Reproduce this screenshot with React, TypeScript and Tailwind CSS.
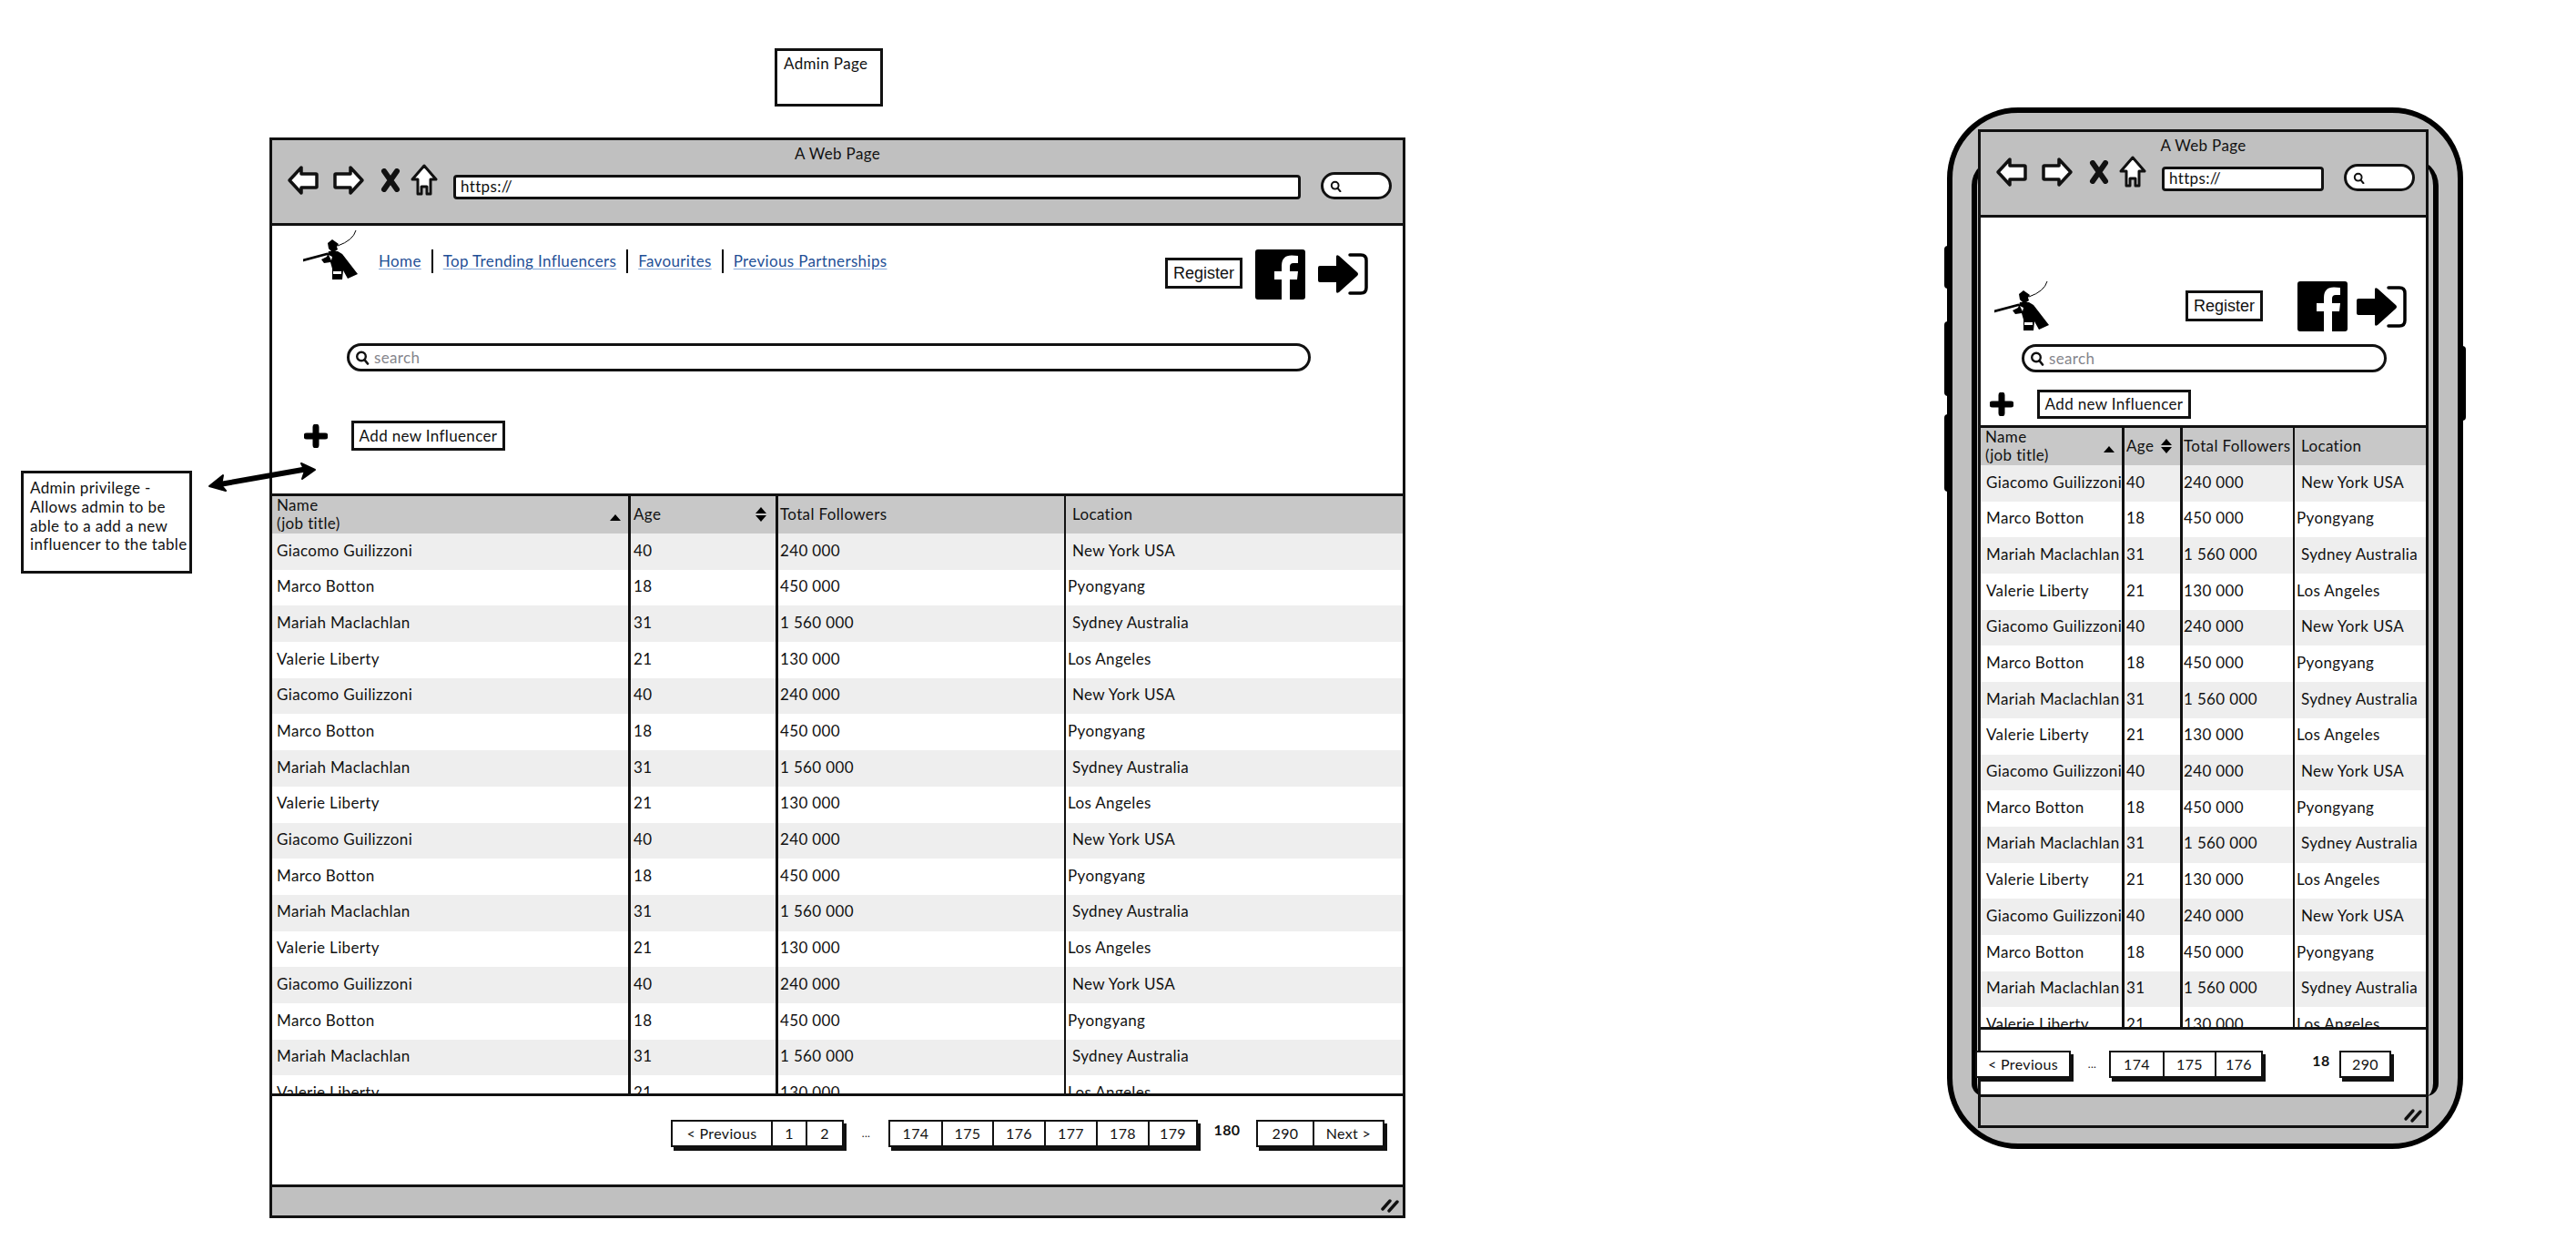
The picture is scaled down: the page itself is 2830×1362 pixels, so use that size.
import type { ReactNode } from "react";

const people = [
  { name: "Giacomo Guilizzoni", age: "40", followers: "240 000", location: "New York USA", indent: true },
  { name: "Marco Botton", age: "18", followers: "450 000", location: "Pyongyang", indent: false },
  { name: "Mariah Maclachlan", age: "31", followers: "1 560 000", location: "Sydney Australia", indent: true },
  { name: "Valerie Liberty", age: "21", followers: "130 000", location: "Los Angeles", indent: false },
];
const rows = [...people, ...people, ...people, ...people];

function BackIcon() {
  return (
    <svg viewBox="0 0 36 34" className="w-[36px] h-[34px]">
      <path d="M3 17 L16 3 V10 H32 Q33 10 33 11 V24 Q33 25 32 25 H16 V31 Z" fill="#fff" stroke="#111" strokeWidth="3.5" strokeLinejoin="round" />
    </svg>
  );
}

function ForwardIcon() {
  return (
    <svg viewBox="0 0 36 34" className="w-[36px] h-[34px]">
      <path d="M33 17 L20 3 V10 H4 Q3 10 3 11 V24 Q3 25 4 25 H20 V31 Z" fill="#fff" stroke="#111" strokeWidth="3.5" strokeLinejoin="round" />
    </svg>
  );
}

function CloseIcon() {
  return (
    <svg viewBox="0 0 22 26" className="w-[22px] h-[26px]">
      <path d="M4 3 L18 23 M18 3 L4 23" stroke="#111" strokeWidth="6" strokeLinecap="round" />
    </svg>
  );
}

function HomeIcon() {
  return (
    <svg viewBox="0 0 30 36" className="w-[30px] h-[36px]">
      <path d="M15 2 L28 17 H22 V33 H18 V25 H12 V33 H8 V17 H2 Z" fill="#fff" stroke="#111" strokeWidth="3" strokeLinejoin="round" />
    </svg>
  );
}

function Magnifier({ className }: { className: string }) {
  return (
    <svg viewBox="0 0 16 16" className={className}>
      <circle cx="7" cy="7" r="4.8" fill="none" stroke="#111" strokeWidth="2.4" />
      <path d="M10.4 10.6 L14 15" stroke="#111" strokeWidth="2.6" strokeLinecap="round" />
    </svg>
  );
}

function FacebookIcon() {
  return (
    <svg viewBox="0 0 55 55" className="w-[55px] h-[55px] shrink-0">
      <path
        fillRule="evenodd"
        fill="#000"
        d="M3 0 H52 Q55 0 55 3 V52 Q55 55 52 55 H38 V33 H46 L47 24 H38 V19 Q38 15 42 15 H47 V7 Q44 6.5 40 6.5 Q29 6.5 29 18 V24 H21 V33 H29 V55 H3 Q0 55 0 52 V3 Q0 0 3 0 Z"
      />
    </svg>
  );
}

function ExitIcon() {
  return (
    <svg viewBox="0 0 55 46" className="w-[55px] h-[46px] shrink-0">
      <path d="M2 14 H20 V4 Q20 1 23 3 L43 21 Q45 23 43 25 L23 43 Q20 45 20 42 V32 H2 Q0 32 0 30 V16 Q0 14 2 14 Z" fill="#000" />
      <path d="M35 2 H47 Q53 2 53 8 V38 Q53 44 47 44 H35" fill="none" stroke="#000" strokeWidth="3.5" strokeLinecap="round" />
    </svg>
  );
}

function PlusIcon() {
  return (
    <svg viewBox="0 0 26 26" className="w-[26px] h-[26px] shrink-0">
      <path d="M13 3 V23 M3 13 H23" stroke="#000" strokeWidth="7" strokeLinecap="round" />
    </svg>
  );
}

function Logo() {
  return (
    <svg viewBox="0 0 60 55" className="w-[60px] h-[55px] shrink-0">
      <path d="M58 0 Q55 11 38 17" fill="none" stroke="#000" strokeWidth="1" />
      <path d="M0 33 L26 26" stroke="#000" strokeWidth="2.8" strokeLinecap="round" />
      <path d="M27 14 L32 10 L39 15 L37 18 L38 21 Q35 24 31 23 L28 20 Z" fill="#000" />
      <path d="M28 23 L38 23 L43 26 L60 48 L49 53 L44 44 L43 54 L32 54 L32 42 L30 35 L23 36 L20 32 L26 29 Z" fill="#000" />
      <path d="M33 45 H42 V48 H33 Z M28 27 L31 33 L32 29 Z" fill="#fff" />
    </svg>
  );
}

function ResizeMark() {
  return (
    <svg viewBox="0 0 22 18" className="w-[22px] h-[18px]">
      <path d="M3 13 L11 4 M10 15 L19 5" stroke="#111" strokeWidth="3.4" strokeLinecap="round" />
    </svg>
  );
}

function SortUp() {
  return <div className="w-0 h-0 border-x-[6px] border-x-transparent border-b-[7px] border-b-black" />;
}

function SortBoth() {
  return (
    <div className="flex flex-col gap-[2px]">
      <div className="w-0 h-0 border-x-[6px] border-x-transparent border-b-[7px] border-b-black" />
      <div className="w-0 h-0 border-x-[6px] border-x-transparent border-t-[7px] border-t-black" />
    </div>
  );
}

function Chrome() {
  return (
    <div className="h-[94px] shrink-0 bg-[#c0c0c0] border-b-[3px] border-[#111] flex flex-col">
      <div className="h-[26px] flex items-end justify-center text-[17px] leading-[22px]">A Web Page</div>
      <div className="flex items-center h-[36px] pl-[16px] pr-[12px]">
        <BackIcon />
        <div className="ml-[14px]"><ForwardIcon /></div>
        <div className="ml-[17px]"><CloseIcon /></div>
        <div className="ml-[11px]"><HomeIcon /></div>
        <div className="ml-[17px] mt-[14px] flex-1 h-[27px] bg-white border-[3px] border-[#111] rounded-[4px] flex items-center pl-[5px] text-[17px]">https://</div>
        <div className="ml-[22px] mt-[12px] w-[78px] h-[30px] bg-white border-[3px] border-[#111] rounded-full flex items-center pl-[7px]">
          <Magnifier className="w-[13px] h-[13px]" />
        </div>
      </div>
    </div>
  );
}

function Footer() {
  return (
    <div className="h-[34px] shrink-0 bg-[#c0c0c0] border-t-[3px] border-[#111] flex items-end justify-end pr-[3px] pb-[2px]">
      <ResizeMark />
    </div>
  );
}

function Table({ cols, first, age, third, sortGap }: { cols: string; first: string; age: string; third: string; sortGap: string }) {
  return (
    <div className="flex-1 h-full border-[3px] border-[#111] overflow-hidden bg-white">
      <div className={`grid ${cols} h-[41px] bg-[#c8c8c8]`}>
        <div className="border-r-[3px] border-[#111] flex items-center justify-between pl-[5px] pr-[8px] pb-[3px] leading-[20px]">
          <div>Name<br />(job title)</div>
          <div className="mt-[6px]"><SortUp /></div>
        </div>
        <div className={`border-r-[3px] border-[#111] flex items-center justify-between pb-[3px] ${age} ${sortGap}`}>
          <span>Age</span>
          <SortBoth />
        </div>
        <div className={`border-r-[2px] border-[#111] flex items-center pb-[3px] whitespace-nowrap ${third}`}>Total Followers</div>
        <div className="flex items-center pl-[7px] pb-[3px]">Location</div>
      </div>
      {rows.map((row, i) => (
        <div key={i} className={`grid ${cols} h-[39.7px] ${i % 2 === 0 ? "bg-[#eeeeee]" : "bg-white"}`}>
          <div className={`border-r-[3px] border-[#111] flex items-center pb-[3px] whitespace-nowrap ${first}`}>{row.name}</div>
          <div className={`border-r-[3px] border-[#111] flex items-center pb-[3px] ${age}`}>{row.age}</div>
          <div className={`border-r-[2px] border-[#111] flex items-center pb-[3px] ${third}`}>{row.followers}</div>
          <div className={`flex items-center pb-[3px] whitespace-nowrap ${row.indent ? "pl-[7px]" : "pl-[2px]"}`}>{row.location}</div>
        </div>
      ))}
    </div>
  );
}

function PageGroup({ cells }: { cells: { label: string; w: string }[] }) {
  return (
    <div className="flex h-[30px] bg-white border-[2px] border-[#111] shadow-[3px_4px_0_#111] text-[16px]">
      {cells.map((c, i) => (
        <div key={c.label} className={`${c.w} flex items-center justify-center ${i > 0 ? "border-l-[2px] border-[#111]" : ""}`}>
          {c.label}
        </div>
      ))}
    </div>
  );
}

function SearchBar({ className }: { className: string }) {
  return (
    <div className={`${className} h-[31px] bg-white border-[3px] border-[#111] rounded-full flex items-center pl-[6px] text-[17px] text-[#85858c]`}>
      <Magnifier className="w-[16px] h-[17px]" />
      <span className="ml-[5px]">search</span>
    </div>
  );
}

function Button({ className, children }: { className: string; children: ReactNode }) {
  return (
    <div className={`${className} bg-white border-[3px] border-[#111] flex items-center justify-center shrink-0`}>
      {children}
    </div>
  );
}

function DesktopWindow() {
  return (
    <div className="absolute left-[296px] top-[151px] w-[1248px] h-[1187px] border-[3px] border-[#111] bg-white flex flex-col">
      <Chrome />
      <div className="flex items-start pl-[34px] pt-[5px] h-[81px]">
        <Logo />
        <div className="ml-[23px] mt-[21px] flex items-center gap-[11px] text-[17px] text-[#1f4f96]">
          <span className="underline decoration-[#86a8d8] underline-offset-2">Home</span>
          <div className="w-[2px] h-[26px] bg-black" />
          <span className="underline decoration-[#86a8d8] underline-offset-2">Top Trending Influencers</span>
          <div className="w-[2px] h-[26px] bg-black" />
          <span className="underline decoration-[#86a8d8] underline-offset-2">Favourites</span>
          <div className="w-[2px] h-[26px] bg-black" />
          <span className="underline decoration-[#86a8d8] underline-offset-2">Previous Partnerships</span>
        </div>
        <div className="ml-auto mr-[38px] flex items-start">
          <Button className="mt-[30px] w-[85px] h-[34px] font-['Liberation_Sans',sans-serif] text-[18px] tracking-normal">Register</Button>
          <div className="ml-[14px] mt-[21px]"><FacebookIcon /></div>
          <div className="ml-[14px] mt-[25px]"><ExitIcon /></div>
        </div>
      </div>
      <SearchBar className="ml-[82px] mt-[48px] w-[1059px]" />
      <div className="ml-[35px] mt-[54px] flex items-center">
        <PlusIcon />
        <Button className="ml-[26px] w-[169px] h-[33px] text-[17px]">Add new Influencer</Button>
      </div>
      <div className="mt-[47px] -mx-[3px] h-[662px] flex">
        <Table
          cols="grid-cols-[394px_162px_316px_1fr]"
          first="pl-[5px]"
          age="pl-[3px]"
          third="pl-[2px]"
          sortGap="pr-[10px]"
        />
      </div>
      <div className="flex-1 flex items-center justify-end pr-[20px] pb-[16px]">
        <PageGroup cells={[{ label: "< Previous", w: "w-[108px]" }, { label: "1", w: "w-[38px]" }, { label: "2", w: "w-[40px]" }]} />
        <div className="w-[49px] text-center text-[12px] leading-none">...</div>
        <PageGroup cells={[{ label: "174", w: "w-[56px]" }, { label: "175", w: "w-[56px]" }, { label: "176", w: "w-[57px]" }, { label: "177", w: "w-[57px]" }, { label: "178", w: "w-[57px]" }, { label: "179", w: "w-[53px]" }]} />
        <div className="w-[64px] text-center font-bold text-[16px] mb-[8px]">180</div>
        <PageGroup cells={[{ label: "290", w: "w-[60px]" }, { label: "Next >", w: "w-[77px]" }]} />
      </div>
      <Footer />
    </div>
  );
}

function PhoneWindow() {
  return (
    <div className="absolute left-[2139px] top-[118px] w-[567px] h-[1144px] rounded-[78px] border-[6px] border-black bg-[#c0c0c0] px-[28px] pt-[18px]">
      {/* side buttons */}
      <div className="absolute -left-[9px] top-[146px] w-[4px] h-[47px] bg-black rounded-l-sm" />
      <div className="absolute -left-[9px] top-[229px] w-[4px] h-[82px] bg-black rounded-l-sm" />
      <div className="absolute -left-[9px] top-[331px] w-[4px] h-[85px] bg-black rounded-l-sm" />
      <div className="absolute -right-[9px] top-[256px] w-[4px] h-[82px] bg-black rounded-r-sm" />
      {/* screen edge */}
      <div className="absolute left-[21px] right-[21px] top-[50px] bottom-[52px] border-x-[6px] border-black rounded-t-[30px] rounded-b-[14px]" />

      <div className="relative w-[495px] h-[1097px] border-[3px] border-[#111] bg-white flex flex-col">
        <Chrome />
        <div className="flex items-start pl-[15px] mt-[70px]">
          <Logo />
          <Button className="ml-[150px] mt-[10px] w-[85px] h-[34px] font-['Liberation_Sans',sans-serif] text-[18px] tracking-normal">Register</Button>
          <div className="ml-[38px]"><FacebookIcon /></div>
          <div className="ml-[10px] mt-[5px]"><ExitIcon /></div>
        </div>
        <SearchBar className="ml-[45px] mt-[14px] w-[401px]" />
        <div className="ml-[10px] mt-[19px] flex items-center">
          <PlusIcon />
          <Button className="ml-[26px] w-[169px] h-[32px] text-[17px]">Add new Influencer</Button>
        </div>
        <div className="mt-[7px] -mx-[3px] h-[664px] flex">
          <Table
            cols="grid-cols-[158px_64px_123px_1fr]"
            first="pl-[6px]"
            age="pl-[2px]"
            third="pl-[1px]"
            sortGap="pr-[9px]"
          />
        </div>
        <div className="flex-1 flex items-center -ml-[6px] pt-[4px]">
          <PageGroup cells={[{ label: "< Previous", w: "w-[101px]" }]} />
          <div className="ml-[5px] w-[37px] text-center text-[12px] leading-none">...</div>
          <PageGroup cells={[{ label: "174", w: "w-[57px]" }, { label: "175", w: "w-[57px]" }, { label: "176", w: "w-[51px]" }]} />
          <div className="ml-[44px] w-[40px] text-center font-bold text-[16px] mb-[8px]">18</div>
          <PageGroup cells={[{ label: "290", w: "w-[53px]" }]} />
        </div>
        <Footer />
      </div>
    </div>
  );
}

export default function App() {
  return (
    <div className="relative w-[2830px] h-[1362px] overflow-hidden bg-white text-[#111] text-[17px] tracking-[0.35px] font-['Lato',sans-serif]">
      {/* note boxes sit freely on the canvas */}
      <div className="absolute left-[851px] top-[53px] w-[119px] h-[64px] border-[3px] border-[#111] pl-[7px] pt-[3px] leading-[22px] whitespace-nowrap">
        Admin Page
      </div>
      <div className="absolute left-[23px] top-[517px] w-[188px] h-[113px] border-[3px] border-[#111] pl-[7px] pt-[6px] leading-[20.8px] whitespace-nowrap">
        Admin privilege -<br />
        Allows admin to be<br />
        able to a add a new<br />
        influencer to the table
      </div>
      <DesktopWindow />
      <PhoneWindow />
      <svg viewBox="0 0 120 32" className="absolute left-[228px] top-[508px] w-[120px] h-[32px]">
        <path d="M8 25 L110 7" stroke="#000" strokeWidth="6" />
        <path d="M2 26 L17 14 L15 25 L20 31 Z M118 8 L103 1 L107 9 L104 18 Z" fill="#000" stroke="#000" strokeWidth="2" strokeLinejoin="round" />
      </svg>
    </div>
  );
}
